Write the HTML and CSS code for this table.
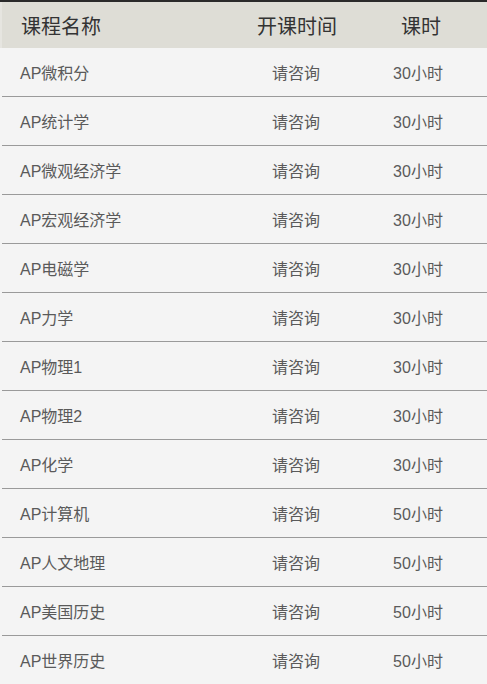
FILE: index.html
```html
<!DOCTYPE html>
<html lang="zh">
<head>
<meta charset="utf-8">
<link rel="stylesheet" href="styles.css">
</head>
<body>
<div class="table">
  <div class="row head">
    <div class="c1">课程名称</div><div class="c2">开课时间</div><div class="c3">课时</div>
  </div>
  <div class="row"><div class="c1">AP微积分</div><div class="c2">请咨询</div><div class="c3">30小时</div></div>
  <div class="row"><div class="c1">AP统计学</div><div class="c2">请咨询</div><div class="c3">30小时</div></div>
  <div class="row"><div class="c1">AP微观经济学</div><div class="c2">请咨询</div><div class="c3">30小时</div></div>
  <div class="row"><div class="c1">AP宏观经济学</div><div class="c2">请咨询</div><div class="c3">30小时</div></div>
  <div class="row"><div class="c1">AP电磁学</div><div class="c2">请咨询</div><div class="c3">30小时</div></div>
  <div class="row"><div class="c1">AP力学</div><div class="c2">请咨询</div><div class="c3">30小时</div></div>
  <div class="row"><div class="c1">AP物理1</div><div class="c2">请咨询</div><div class="c3">30小时</div></div>
  <div class="row"><div class="c1">AP物理2</div><div class="c2">请咨询</div><div class="c3">30小时</div></div>
  <div class="row"><div class="c1">AP化学</div><div class="c2">请咨询</div><div class="c3">30小时</div></div>
  <div class="row"><div class="c1">AP计算机</div><div class="c2">请咨询</div><div class="c3">50小时</div></div>
  <div class="row"><div class="c1">AP人文地理</div><div class="c2">请咨询</div><div class="c3">50小时</div></div>
  <div class="row"><div class="c1">AP美国历史</div><div class="c2">请咨询</div><div class="c3">50小时</div></div>
  <div class="row last"><div class="c1">AP世界历史</div><div class="c2">请咨询</div><div class="c3">50小时</div></div>
</div>
</body>
</html>
```
FILE: styles.css
```css
html, body {
  margin: 0;
  padding: 0;
  background: #f4f4f4;
}
body {
  font-family: "Liberation Sans", "Noto Sans CJK SC", sans-serif;
}
.table {
  border-top: 2px solid #2a2a2a;
  width: 487px;
}
.row {
  display: grid;
  grid-template-columns: 229px 130px 114px 12px;
  height: 48px;
  align-items: center;
  border-bottom: 1px solid #9a9a9a;
  margin-left: 2px;
  font-size: 16px;
  color: #5a5a5a;
  background: #f4f4f4;
}
.row.last {
  border-bottom: none;
}
.row.head {
  height: 46px;
  margin-left: 0;
  padding-left: 2px;
  border-bottom: none;
  background: #deddd6;
  box-shadow: inset 2px 0 0 #e6e5e0;
  font-size: 20px;
  color: #333;
}
.c1 {
  padding-left: 18px;
}
.head .c1 {
  padding-left: 19px;
}
.c2, .c3 {
  text-align: center;
}
.head .c2 {
  padding-left: 2px;
}
.head .c3 {
  padding-left: 6px;
}
```
